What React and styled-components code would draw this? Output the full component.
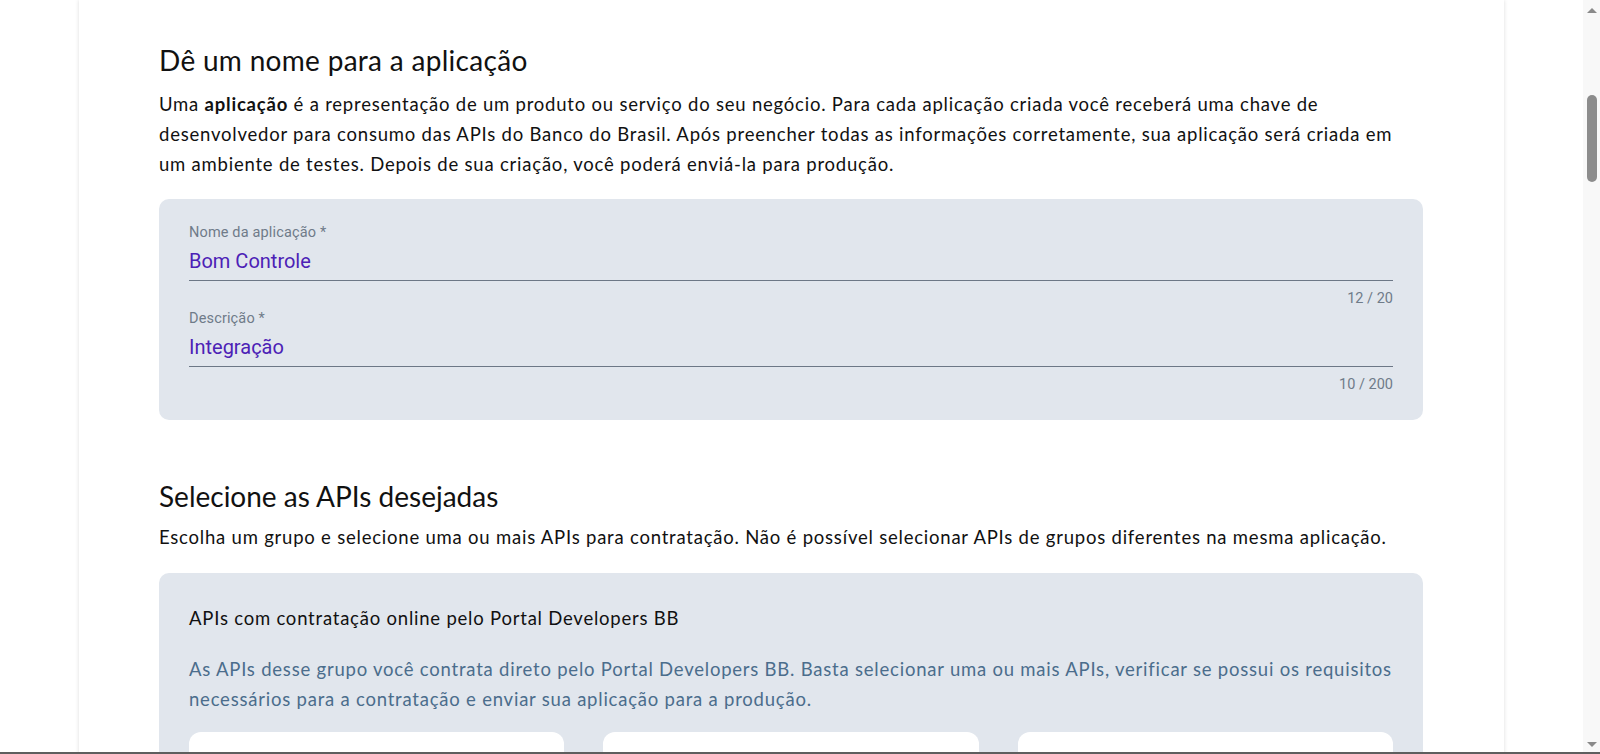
import React from "react";
import styled, { createGlobalStyle } from "styled-components";

const GlobalStyle = createGlobalStyle`
  html, body { margin: 0; padding: 0; background: #ffffff; }
  body { font-family: Lato, "Open Sans", sans-serif; color: #111111; }
  * { box-sizing: border-box; }
`;

const Viewport = styled.div`
  display: flex;
  height: 754px;
  overflow: hidden;
  border-bottom: 2px solid #5e5e5e;
  background: #ffffff;
`;

const Main = styled.main`
  flex: 1;
  min-width: 0;
  overflow: hidden;
`;

const Sheet = styled.div`
  max-width: 1425px;
  margin: 0 auto;
  min-height: 100%;
  background: #ffffff;
  box-shadow: 0 0 4px rgba(0, 0, 0, 0.14);
  padding: 42px 81px 60px 80px;
`;

const Section = styled.section`
  & + & {
    margin-top: 58px;
  }
`;

const Title = styled.h2`
  margin: 0 0 ${(p) => p.$gap}px;
  font-family: Lato, "Open Sans", sans-serif;
  font-weight: 400;
  font-size: 28px;
  line-height: 36px;
  color: #111111;
  letter-spacing: ${(p) => (p.$tight ? 0 : 0.3)}px;
`;

const Lead = styled.p`
  margin: 0;
  font-size: 18.5px;
  line-height: 30px;
  letter-spacing: 0.78px;
  color: #111111;
  strong {
    font-weight: 700;
  }
`;

const Panel = styled.div`
  margin-top: ${(p) => p.$gap}px;
  background: #e1e6ed;
  border-radius: 10px;
  padding: ${(p) => p.$pad};
`;

const FieldWrap = styled.div`
  display: flex;
  flex-direction: column;
  & + & {
    margin-top: 4px;
  }
`;

const FieldLabel = styled.label`
  font-family: Roboto, "Liberation Sans", sans-serif;
  font-size: 14.5px;
  line-height: 16px;
  letter-spacing: 0.15px;
  color: #6f7b89;
`;

const FieldInput = styled.div`
  margin-top: 8px;
  padding-bottom: 7px;
  border-bottom: 1.5px solid #6c7786;
  font-family: Roboto, "Liberation Sans", sans-serif;
  font-size: 20px;
  line-height: 24px;
  color: #4c21b6;
`;

const Counter = styled.div`
  margin-top: 10px;
  text-align: right;
  font-family: Roboto, "Liberation Sans", sans-serif;
  font-size: 14.5px;
  line-height: 16px;
  color: #6f7b89;
`;

const GroupTitle = styled.h3`
  margin: 0;
  font-weight: 400;
  font-size: 18.5px;
  line-height: 30px;
  letter-spacing: 0.78px;
  color: #111111;
`;

const GroupText = styled.p`
  margin: 21px 0 0;
  font-size: 18.5px;
  line-height: 30px;
  letter-spacing: 0.78px;
  color: #4b6d8c;
`;

const CardGrid = styled.div`
  margin-top: 18px;
  display: grid;
  grid-template-columns: repeat(3, 1fr);
  gap: 39px;
`;

const ApiCard = styled.div`
  height: 160px;
  background: #ffffff;
  border-radius: 12px;
`;

const ScrollTrack = styled.div`
  width: 17px;
  flex: none;
  display: flex;
  flex-direction: column;
  align-items: center;
  background: #f8f8f8;
`;

const Arrow = styled.div`
  width: 0;
  height: 0;
  border-left: 5px solid transparent;
  border-right: 5px solid transparent;
  ${(p) =>
    p.$down
      ? `border-top: 5px solid #8a8a8a; margin-bottom: 5px;`
      : `border-bottom: 5px solid #8a8a8a; margin-top: 8px;`}
`;

const Thumb = styled.div`
  width: 10px;
  height: 87px;
  margin-top: 82px;
  border-radius: 5px;
  background: #8c8c8c;
`;

const Spacer = styled.div`
  flex: 1;
`;

function Field({ label, value, count }) {
  return (
    <FieldWrap>
      <FieldLabel>{label}</FieldLabel>
      <FieldInput>{value}</FieldInput>
      <Counter>{count}</Counter>
    </FieldWrap>
  );
}

export default function App() {
  return (
    <>
      <GlobalStyle />
      <Viewport>
        <Main>
          <Sheet>
            <Section>
              <Title $gap={11}>Dê um nome para a aplicação</Title>
              <Lead>
                Uma <strong>aplicação</strong> é a representação de um produto ou serviço do seu
                negócio. Para cada aplicação criada você receberá uma chave de desenvolvedor para
                consumo das APIs do Banco do Brasil. Após preencher todas as informações
                corretamente, sua aplicação será criada em um ambiente de testes. Depois de sua
                criação, você poderá enviá-la para produção.
              </Lead>
              <Panel $gap={20} $pad="26px 30px 27px">
                <Field label="Nome da aplicação *" value="Bom Controle" count="12 / 20" />
                <Field label="Descrição *" value="Integração" count="10 / 200" />
              </Panel>
            </Section>
            <Section>
              <Title $gap={8} $tight>
                Selecione as APIs desejadas
              </Title>
              <Lead>
                Escolha um grupo e selecione uma ou mais APIs para contratação. Não é possível
                selecionar APIs de grupos diferentes na mesma aplicação.
              </Lead>
              <Panel $gap={21} $pad="30px 30px 30px">
                <GroupTitle>APIs com contratação online pelo Portal Developers BB</GroupTitle>
                <GroupText>
                  As APIs desse grupo você contrata direto pelo Portal Developers BB. Basta
                  selecionar uma ou mais APIs, verificar se possui os requisitos necessários para a
                  contratação e enviar sua aplicação para a produção.
                </GroupText>
                <CardGrid>
                  <ApiCard />
                  <ApiCard />
                  <ApiCard />
                </CardGrid>
              </Panel>
            </Section>
          </Sheet>
        </Main>
        <ScrollTrack>
          <Arrow />
          <Thumb />
          <Spacer />
          <Arrow $down />
        </ScrollTrack>
      </Viewport>
    </>
  );
}
